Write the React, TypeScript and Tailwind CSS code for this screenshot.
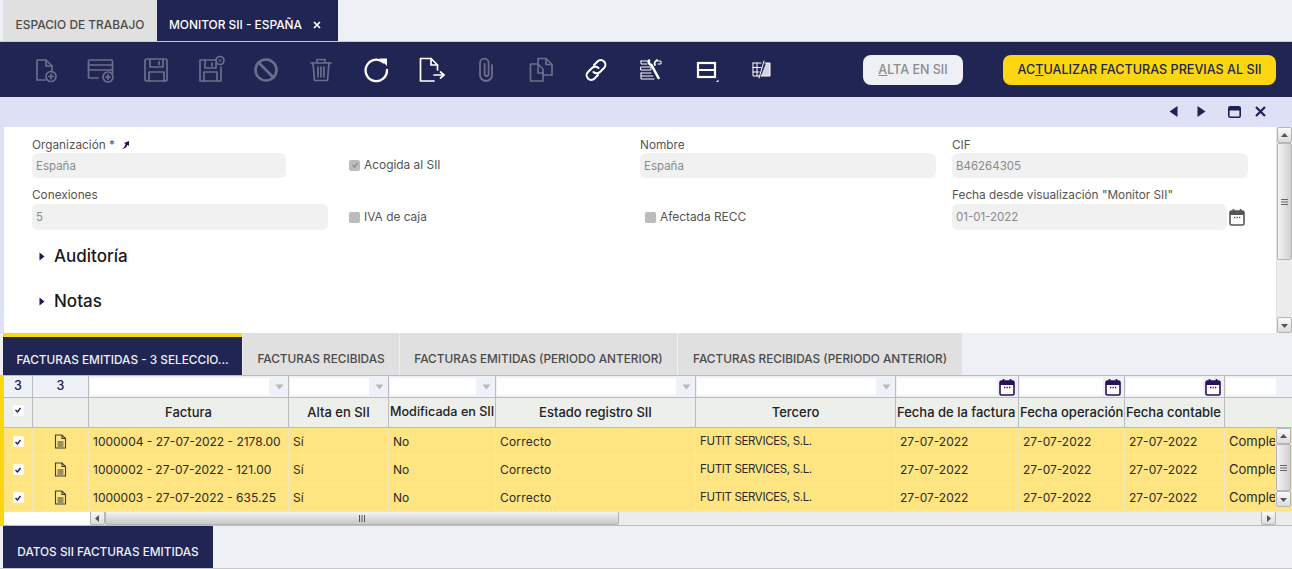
import type { ReactNode } from "react";

const FONT = "font-['Inter','Noto_Sans',sans-serif]";

function Ico({ children, w = 30, h = 30, box, className = "" }: { children: ReactNode; w?: number; h?: number; box?: string; className?: string }) {
  return (
    <svg width={w} height={h} viewBox={box ?? `0 0 ${w} ${h}`} fill="none" stroke="currentColor" strokeWidth="1.7" strokeLinecap="round" strokeLinejoin="round" className={className}>
      {children}
    </svg>
  );
}

const toolIcons: { on?: boolean; icon: ReactNode }[] = [
  {
    icon: (
      <>
        <path d="M6 24V5h9l6 6v6" />
        <path d="M15 5v6h6" />
        <path d="M6 25h8" />
        <circle cx="20" cy="21.5" r="5" />
        <path d="M17.8 21.5h4.4M20 19.3v4.4" />
      </>
    ),
  },
  {
    icon: (
      <>
        <path d="M12 23H3.5a1 1 0 0 1-1-1V6a1 1 0 0 1 1-1h22a1 1 0 0 1 1 1v12" />
        <path d="M2.5 10h24M2.5 15h24" />
        <circle cx="22" cy="22" r="5" />
        <path d="M19.8 22h4.4M22 19.8v4.4" />
      </>
    ),
  },
  {
    icon: (
      <>
        <rect x="4" y="4" width="22" height="22" rx="2" />
        <path d="M9 4v8h13V4M18 6.500v3" />
        <path d="M8 26v-9h15v9" />
      </>
    ),
  },
  {
    icon: (
      <>
        <path d="M20 5H4v21h21V12" />
        <path d="M9 5v8h11V8M16 8v3" />
        <path d="M8 26v-9h13v9" />
        <circle cx="24" cy="5.500" r="4" />
        <path d="M23 4.500l2 2M25 4.500l-2 2" strokeWidth="1" />
      </>
    ),
  },
  {
    icon: (
      <>
        <circle cx="15" cy="15" r="10.500" strokeWidth="2.600" />
        <path d="M7.500 7.500l15 15" strokeWidth="2.600" />
      </>
    ),
  },
  {
    icon: (
      <>
        <path d="M5 8h20M11 7.500V4.500h8v3" />
        <path d="M7 8l1.500 17.500h13L23 8" />
        <path d="M12 12v10M15 12v10M18 12v10" />
      </>
    ),
  },
  {
    on: true,
    icon: (
      <>
        <path d="M22.500 7.500A10.700 10.700 0 1 0 26 15" strokeWidth="2.300" />
        <path d="M18.500 3.500h7.500v7.500z" fill="currentColor" stroke="none" />
      </>
    ),
  },
  {
    on: true,
    icon: (
      <>
        <path d="M18 26H4.500V3.500H15l6.500 6.500v5" />
        <path d="M15 3.500V10h6.500" />
        <path d="M18 20h9.500" />
        <path d="M24.500 17l3.500 3-3.500 3" />
      </>
    ),
  },
  {
    icon: (
      <path d="M21 11v10a6 6 0 0 1-12 0V9a4.300 4.300 0 0 1 8.600 0v11a2 2 0 0 1-4 0V10" strokeWidth="1.800" transform="translate(0 -1)" />
    ),
  },
  {
    icon: (
      <>
        <path d="M12 9H4.500v17H17v-8" />
        <path d="M12 9l5 5v4h-5z" />
        <path d="M12 9V3.500h8l6 6V20h-9" />
        <path d="M20 3.500V9.500h6" />
      </>
    ),
  },
  {
    on: true,
    icon: (
      <>
        <path d="M13 10l3.500-3.500a4.500 4.500 0 0 1 6.500 6.500l-4 4a4.500 4.500 0 0 1-6.500 0" strokeWidth="2.100" />
        <path d="M17 20l-3.500 3.500a4.500 4.500 0 0 1-6.500-6.500l4-4a4.500 4.500 0 0 1 6.500 0" strokeWidth="2.100" />
      </>
    ),
  },
  {
    on: true,
    icon: (
      <>
        <path d="M5 6h8M5 6v3h6M21 6h4v3h-3M5 12h10v3H5zM5 18h10M5 18v3h12M5 21v3h13" strokeWidth="1" />
        <path d="M13 5.500c-1 2 .5 4 2.500 4.500l7 13" strokeWidth="2.600" />
        <path d="M21 5c-1.500 1-3 3-2 5" strokeWidth="1.800" />
      </>
    ),
  },
  {
    on: true,
    icon: (
      <>
        <rect x="7" y="8" width="17" height="14" strokeWidth="2.200" strokeLinecap="butt" strokeLinejoin="miter" />
        <path d="M8 15h15" strokeWidth="2" strokeLinecap="butt" />
        <path d="M27.500 27h-2.500l2.500-2.500z" fill="currentColor" stroke="none" />
      </>
    ),
  },
  {
    on: true,
    icon: (
      <>
        <path d="M19 8h5v13h-9M7 8h8M7 8v13h6M7 12.500h8M7 17h6M11 8v13" strokeWidth="1" />
        <path d="M15 21h9V8h-4z" fill="currentColor" stroke="none" opacity="0.8" />
        <path d="M18 6l-5 17" strokeWidth="1" />
      </>
    ),
  },
];

function Field({ label, value, width, tall, extra }: { label: ReactNode; value: string; width: string; tall?: boolean; extra?: ReactNode }) {
  return (
    <div className="flex flex-col">
      <div className={`${tall ? "h-[17px]" : "h-[16px]"} text-[11.800px] leading-[16px] text-[#555]`}>{label}</div>
      <div className="flex items-center">
        <div className={`${width} ${tall ? "h-[26px] leading-[26px]" : "h-[25px] pt-[1px] leading-[25px]"} rounded-md bg-[#f1f1f1] pl-[4px] text-[11.500px] text-[#8a8a8a]`}>{value}</div>
        {extra}
      </div>
    </div>
  );
}

function Check({ label, checked, className = "" }: { label: string; checked?: boolean; className?: string }) {
  return (
    <div className={`flex items-center self-end pb-[4px] ${className}`}>
      <div className="flex h-[11px] w-[11px] items-center justify-center rounded-[2px] bg-[#bcbcbc]">
        {checked && (
          <svg width="8" height="8" viewBox="0 0 8 8" fill="none" stroke="#8d8d8d" strokeWidth="1.300">
            <path d="M1.500 4l2 2 3-4" />
          </svg>
        )}
      </div>
      <span className="ml-[4px] text-[11.900px] text-[#555]">{label}</span>
    </div>
  );
}

function Calendar({ color }: { color: string }) {
  return (
    <svg width="16" height="18" viewBox="0 0 16 18" className="shrink-0" style={{ color }}>
      <rect x="1" y="3" width="14" height="14" rx="1.500" fill="#fff" stroke="currentColor" strokeWidth="1.600" />
      <rect x="1" y="3" width="14" height="4" fill="currentColor" />
      <path d="M4.500 1v3M11.500 1v3" stroke="currentColor" strokeWidth="1.600" />
      <path d="M5 9.500h1.300M7.500 9.500h1.300M10 9.500h1.300" stroke="currentColor" strokeWidth="1.300" />
    </svg>
  );
}

function Section({ label }: { label: string }) {
  return (
    <div className="flex h-[45px] items-center pl-[35px]">
      <svg width="6" height="9" viewBox="0 0 6 9" className="mr-[9px]">
        <path d="M0.500 0.500L5.500 4.500L0.500 8.500Z" fill="#2b0f57" />
      </svg>
      <span className="text-[17px] font-medium text-[#1a1a1a]">{label}</span>
    </div>
  );
}

function Arrow({ dir, className = "" }: { dir: "up" | "down" | "left" | "right"; className?: string }) {
  const d = { up: "M1 6L4.500 2L8 6Z", down: "M1 3L4.500 7L8 3Z", left: "M6 1L2 4.500L6 8Z", right: "M3 1L7 4.500L3 8Z" }[dir];
  return (
    <svg width="9" height="9" viewBox="0 0 9 9" className={className}>
      <path d={d} fill="#555" />
    </svg>
  );
}

function ScrollButton({ dir, className = "" }: { dir: "up" | "down" | "left" | "right"; className?: string }) {
  return (
    <div className={`flex shrink-0 items-center justify-center rounded-[2px] border border-[#b5b5b5] bg-gradient-to-b from-[#fafafa] to-[#dcdcdc] ${className}`}>
      <Arrow dir={dir} />
    </div>
  );
}

function Grip() {
  return (
    <svg width="9" height="8" viewBox="0 0 9 8" stroke="#666" strokeWidth="1">
      <path d="M1 1.500h7M1 4h7M1 6.500h7" />
    </svg>
  );
}

const GRID = "grid grid-cols-[29px_56px_200px_100px_107px_200px_200px_123px_106px_100px_51px]";

const filters = [
  { text: "3", bold: true },
  { text: "3", bold: true },
  { select: true },
  { select: true },
  { select: true },
  { select: true },
  { select: true },
  { date: true },
  { date: true },
  { date: true },
  { plain: true },
];

const heads: { text: string; left?: boolean; size?: string }[] = [
  { text: "" },
  { text: "" },
  { text: "Factura" },
  { text: "Alta en SII" },
  { text: "Modificada en SII", left: true, size: "text-[12.600px]" },
  { text: "Estado registro SII" },
  { text: "Tercero" },
  { text: "Fecha de la factura", left: true },
  { text: "Fecha operación", left: true },
  { text: "Fecha contable", left: true },
  { text: "" },
];

const rows = [
  "1000004 - 27-07-2022 - 2178.00",
  "1000002 - 27-07-2022 - 121.00",
  "1000003 - 27-07-2022 - 635.25",
];

function TickBox() {
  return (
    <div className="flex h-[11px] w-[11px] items-center justify-center rounded-[2px] bg-white">
      <svg width="8" height="8" viewBox="0 0 8 8" fill="none" stroke="#2b0f57" strokeWidth="1.300">
        <path d="M1.500 4l2 2 3-4" />
      </svg>
    </div>
  );
}

function DocIcon() {
  return (
    <svg width="13" height="15" viewBox="0 0 13 15" fill="none" stroke="#3a3a3a" strokeWidth="1.100">
      <path d="M1.500 1h6.500l3.500 3.500V14h-10z" />
      <path d="M8 1v3.500h3.500" />
      <path d="M3.500 8h6M3.500 10h6M3.500 12h6" />
    </svg>
  );
}

export default function App() {
  return (
    <div className={`flex h-[569px] w-[1292px] flex-col overflow-hidden bg-white ${FONT}`}>
      {/* window tabs */}
      <div className="flex h-[42px] shrink-0 border-b border-[#c8c8cc] bg-[#eef0f6] pl-[3px]">
        <div className="flex w-[154px] items-center justify-center bg-[#e0e0e0] pt-[8px] text-[11.900px] font-medium text-[#4a4a4a]">ESPACIO DE TRABAJO</div>
        <div className="flex w-[181px] items-center bg-[#202553] pl-[12px] pt-[8px] text-[11.900px] font-medium text-white">
          MONITOR SII - ESPAÑA
          <svg width="8" height="8" viewBox="0 0 8 8" className="ml-[11px]" stroke="#fff" strokeWidth="1.700">
            <path d="M1 1l6 6M7 1L1 7" />
          </svg>
        </div>
      </div>

      {/* toolbar */}
      <div className="flex h-[55px] shrink-0 items-center bg-[#202553] pl-[18px]">
        {toolIcons.map((t, i) => (
          <div key={i} className={`flex w-[55px] justify-center ${t.on ? "text-white" : "text-[#6c6f8c]"}`}>
            <Ico>{t.icon}</Ico>
          </div>
        ))}
        <div className="ml-[75px] mt-[1px] flex h-[30px] w-[100px] items-center justify-center rounded-lg bg-[#eef0f6] text-[12.500px] font-medium text-[#8b8b8b]">
          <span><span className="underline">A</span>LTA EN SII</span>
        </div>
        <div className="ml-[40px] mt-[1px] flex h-[30px] w-[273px] items-center justify-center rounded-lg bg-[#fcd610] text-[12.600px] font-medium text-[#202553]">
          <span>AC<span className="underline">T</span>UALIZAR FACTURAS PREVIAS AL SII</span>
        </div>
      </div>

      {/* record nav */}
      <div className="flex h-[30px] shrink-0 items-center justify-end bg-[#dee0f6] pb-[1px] pr-[26px] text-[#1c2153]">
        <svg width="9" height="11" viewBox="0 0 9 11" className="mr-[19px]"><path d="M8.500 0v11L0.500 5.500z" fill="currentColor" /></svg>
        <svg width="9" height="11" viewBox="0 0 9 11" className="mr-[22px]"><path d="M0.500 0v11l8-5.500z" fill="currentColor" /></svg>
        <svg width="13" height="12" viewBox="0 0 13 12" className="mr-[14px]" fill="none"><rect x="0.800" y="0.800" width="11.400" height="10.400" rx="1.500" stroke="currentColor" strokeWidth="1.600" /><rect x="1" y="1" width="11" height="3.500" fill="currentColor" /></svg>
        <svg width="11" height="11" viewBox="0 0 11 11" stroke="currentColor" strokeWidth="2.200"><path d="M1 1l9 9M10 1l-9 9" /></svg>
      </div>

      {/* form */}
      <div className="flex h-[206px] shrink-0 border-l-[4px] border-[#dee0f6]">
        <div className="min-w-0 flex-1">
          <div className="grid grid-cols-[317px_291px_312px_1fr] gap-y-[9px] pl-[28px] pt-[10px]">
            <Field
              label={
                <span className="flex items-center">
                  Organización *
                  <svg width="9" height="10" viewBox="0 0 9 10" className="ml-[6px]"><path d="M1 9c2-1 3-3 3.500-5L3 3l5-2 0 5-1.500-1.200C6 7 4 9 1 9z" fill="#2b0f57" /></svg>
                </span>
              }
              value="España"
              width="w-[254px]"
            />
            <Check label="Acogida al SII" checked />
            <Field label="Nombre" value="España" width="w-[296px]" />
            <Field label="CIF" value="B46264305" width="w-[296px]" />
            <Field label="Conexiones" value="5" width="w-[296px]" tall />
            <Check label="IVA de caja" />
            <Check label="Afectada RECC" className="pl-[5px]" />
            <Field
              label='Fecha desde visualización "Monitor SII"'
              value="01-01-2022"
              width="w-[275px]"
              tall
              extra={<div className="ml-[2px]"><Calendar color="#555" /></div>}
            />
          </div>
          <div className="pt-[4px]">
            <Section label="Auditoría" />
            <Section label="Notas" />
          </div>
        </div>
        <div className="flex w-[16px] shrink-0 flex-col border-l border-[#e3e3e3] bg-[#ececec]">
          <ScrollButton dir="up" className="h-[16px] w-[15px]" />
          <div className="flex h-[117px] w-[15px] items-center justify-center rounded-[2px] border border-[#b5b5b5] bg-gradient-to-r from-[#f4f4f4] to-[#d0d0d0]"><Grip /></div>
          <div className="flex-1" />
          <ScrollButton dir="down" className="h-[16px] w-[15px]" />
        </div>
      </div>

      {/* detail tabs */}
      <div className="flex h-[42px] shrink-0 bg-[#eef0f6] pl-[3px]">
        <div className="flex w-[239px] items-center justify-center border-t-[4px] border-[#fcd610] bg-[#202553] pt-[9px] text-[11.800px] font-medium text-[#eef0f6]">FACTURAS EMITIDAS - 3 SELECCIO...</div>
        <div className="ml-[1px] flex w-[156px] items-center justify-center bg-[#e0e0e0] pt-[11px] text-[11.800px] font-medium text-[#4a4a4a]">FACTURAS RECIBIDAS</div>
        <div className="ml-[1px] flex w-[277px] items-center justify-center bg-[#e0e0e0] pt-[11px] text-[11.800px] font-medium text-[#4a4a4a]">FACTURAS EMITIDAS (PERIODO ANTERIOR)</div>
        <div className="ml-[1px] flex w-[284px] items-center justify-center bg-[#e0e0e0] pt-[11px] text-[11.800px] font-medium text-[#4a4a4a]">FACTURAS RECIBIDAS (PERIODO ANTERIOR)</div>
      </div>

      {/* grid */}
      <div className="flex h-[151px] shrink-0 flex-col border-b border-l-[4px] border-b-[#bcbcbc] border-l-[#fcd610] bg-white">
        <div className="relative min-h-0 flex-1">
          <div className={`${GRID} h-[23px] border-y border-[#bcbcbc] bg-[#eef2f8]`}>
            {filters.map((f, i) => (
              <div key={i} className="flex h-full items-center overflow-hidden border-r border-[#bcbcbc] last:border-r-0">
                {f.text && <span className="w-full text-center text-[12.500px] font-medium text-[#1c2153]">{f.text}</span>}
                {f.select && (
                  <>
                    <div className="ml-[1px] mr-[2px] h-[17px] min-w-0 flex-1 bg-white" />
                    <svg width="9" height="6" viewBox="0 0 9 6" className="mx-[4px] shrink-0"><path d="M0.500 0.500h8L4.500 5.500z" fill="#b8b8b8" /></svg>
                  </>
                )}
                {f.date && (
                  <>
                    <div className="ml-[1px] mr-[2px] h-[17px] min-w-0 flex-1 bg-white" />
                    <div className="mr-[3px]"><Calendar color="#2b0f57" /></div>
                  </>
                )}
                {f.plain && <div className="ml-[1px] h-[17px] w-full bg-white" />}
              </div>
            ))}
          </div>
          <div className={`${GRID} h-[30px] border-b border-[#bcbcbc] bg-[#ecefea]`}>
            {heads.map((h, i) => (
              <div key={i} className={`flex items-center overflow-hidden whitespace-nowrap border-r border-[#bcbcbc] font-medium text-[#222] last:border-r-0 ${h.size ?? "text-[13px]"} ${h.left ? "justify-start pl-[1px]" : "justify-center"}`}>
                {i === 0 ? <div className="mb-[5px]"><TickBox /></div> : h.text}
              </div>
            ))}
          </div>
          {rows.map((r) => (
            <div key={r} className={`${GRID} h-[28px] border-b border-[#f0e8b8] bg-[#ffe582] text-[12px] text-[#2a2a2a]`}>
              <div className="flex items-center justify-center border-r border-[#f0e8b8]"><TickBox /></div>
              <div className="flex items-center justify-center border-r border-[#f0e8b8]"><DocIcon /></div>
              <div className="flex items-center whitespace-nowrap border-r border-[#f0e8b8] pl-[4px]">{r}</div>
              <div className="flex items-center border-r border-[#f0e8b8] pl-[4px]">Sí</div>
              <div className="flex items-center border-r border-[#f0e8b8] pl-[4px]">No</div>
              <div className="flex items-center border-r border-[#f0e8b8] pl-[4px] tracking-[0.2px]">Correcto</div>
              <div className="flex items-center whitespace-nowrap border-r border-[#f0e8b8] pl-[4px] text-[11.500px] tracking-[-0.35px]">FUTIT SERVICES, S.L.</div>
              <div className="flex items-center border-r border-[#f0e8b8] pl-[4px]">27-07-2022</div>
              <div className="flex items-center border-r border-[#f0e8b8] pl-[4px]">27-07-2022</div>
              <div className="flex items-center border-r border-[#f0e8b8] pl-[4px]">27-07-2022</div>
              <div className="ml-[4px] flex w-[46px] items-center overflow-hidden text-[13px]">Completado</div>
            </div>
          ))}
          {/* vertical scrollbar lies over the last column */}
          <div className="absolute right-[1px] top-[53px] flex h-[79px] w-[15px] flex-col bg-[#ececec]">
            <ScrollButton dir="up" className="h-[16px]" />
            <div className="flex flex-1 items-center justify-center rounded-[2px] border border-[#b5b5b5] bg-gradient-to-r from-[#f4f4f4] to-[#d0d0d0]"><Grip /></div>
            <ScrollButton dir="down" className="h-[16px]" />
          </div>
        </div>
        <div className="flex h-[15px] shrink-0 pl-[86px]">
          <div className="flex flex-1 border-t border-[#b5b5b5] bg-[#ececec]">
            <ScrollButton dir="left" className="h-[14px] w-[15px]" />
            <div className="flex w-[514px] items-center justify-center rounded-[2px] border border-[#b5b5b5] bg-gradient-to-b from-[#f4f4f4] to-[#c8c8c8]">
              <svg width="8" height="7" viewBox="0 0 8 7" stroke="#555" strokeWidth="1"><path d="M1.500 0v7M4 0v7M6.500 0v7" /></svg>
            </div>
            <div className="flex-1" />
            <ScrollButton dir="right" className="mr-[16px] h-[14px] w-[15px]" />
          </div>
        </div>
      </div>

      {/* bottom tab */}
      <div className="flex min-h-0 flex-1 border-b border-[#c8c8cc] bg-[#eef0f6] pl-[3px]">
        <div className="flex w-[210px] items-center justify-center bg-[#202553] pt-[11px] text-[11.800px] font-medium text-[#eef0f6]">DATOS SII FACTURAS EMITIDAS</div>
      </div>
    </div>
  );
}
